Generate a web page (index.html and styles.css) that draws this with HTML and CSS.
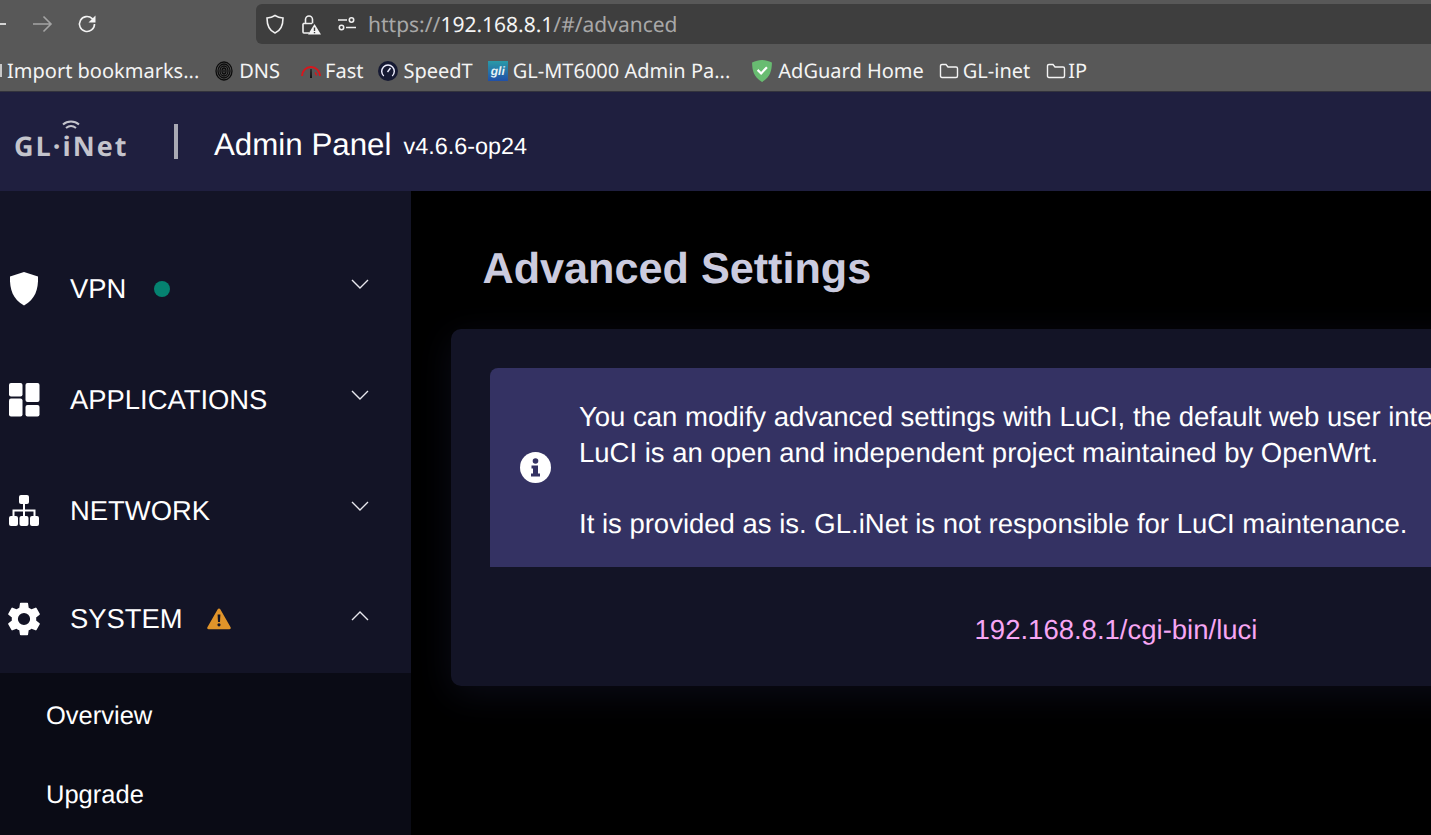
FILE: index.html
```html
<!DOCTYPE html>
<html lang="en">
  <head>
    <meta charset="UTF-8" />
    <meta name="viewport" content="width=device-width, initial-scale=1.0" />
    <title>Admin Panel</title>
    <link rel="stylesheet" href="styles.css">
  </head>

  <body>
    <!-- Browser toolbar -->
    <div class="toolbar">
      <svg class="tool-back" width="6" height="20" viewBox="0 0 6 20"><path d="M0 10h6" /></svg>
      <svg class="tool-forward" width="22" height="20" viewBox="0 0 22 20"><path d="M2 10h18M12.500 2.500 20 10l-7.500 7.500" /></svg>
      <svg class="tool-reload" width="22" height="22" viewBox="0 0 22 22"><path d="M18.500 11a7.500 7.500 0 1 1-2.300-5.400L18.500 8" /><path class="solid" d="M19.500 2.500v7h-7z" /></svg>
      <div class="urlbar">
        <svg class="url-icon" width="20" height="22" viewBox="0 0 20 22"><path d="M10 2.500c2.500 1.600 5 2.300 8 2.500 0 7-1.800 12.500-8 15C3.800 17.500 2 12 2 5c3-.2 5.500-.9 8-2.500z" /></svg>
        <svg class="url-icon" width="20" height="22" viewBox="0 0 20 22"><path d="M2 10.500h9M2 10.500v8.500c0 .8.400 1 1 1h5M4.500 10.500V6.500a3.500 3.500 0 0 1 7 0v4" /><path class="solid" d="M13.500 11 20 21.500H7z" /><path class="lock-mark" d="M13.500 14.500v3.500M13.500 19v1.200" /></svg>
        <svg class="url-icon" width="20" height="16" viewBox="0 0 20 16"><circle cx="14.500" cy="4" r="2.200" /><circle cx="4.500" cy="11.500" r="2.200" /><path d="M1 4h9M9 11.500h10" /></svg>
        <span class="url-text"><span class="url-dim">https://</span>192.168.8.1<span class="url-dim">/#/advanced</span></span>
      </div>
    </div>

    <!-- Bookmarks -->
    <div class="bookmarks">
      <span class="bookmark-cut"></span>
      <span class="bookmark">Import bookmarks...</span>
      <span class="bookmark bm-dns">
        <svg width="18" height="20" viewBox="0 0 18 20"><ellipse class="fp" cx="9" cy="10" rx="8" ry="9" /><ellipse class="fp" cx="9" cy="10" rx="6" ry="7" /><ellipse class="fp" cx="9" cy="10" rx="4" ry="5" /><ellipse class="fp" cx="9" cy="10" rx="2" ry="3" /><path class="fp" d="M9 8.500v3" /></svg>
        DNS
      </span>
      <span class="bookmark bm-fast">
        <svg width="22" height="16" viewBox="0 0 22 16"><path class="gauge" d="M2 13a9 9 0 0 1 18 0" /><path class="gauge-thin" d="M15 9.500a5 5 0 0 1 1.500 3" /><path class="needle" d="M10.500 6h1l.5 9h-2z" /></svg>
        Fast
      </span>
      <span class="bookmark bm-speed">
        <svg width="20" height="20" viewBox="0 0 20 20"><circle class="sp-disc" cx="10" cy="10" r="10" /><path class="sp-ring" d="M5.800 15a6.300 6.300 0 1 1 8.400 0" /><path class="sp-ring" d="M9.500 11l3-4" /></svg>
        SpeedT
      </span>
      <span class="bookmark bm-gl">
        <span class="gl-tile">gli</span>
        GL-MT6000 Admin Pa...
      </span>
      <span class="bookmark bm-ad">
        <svg width="22" height="22" viewBox="0 0 20 20"><path class="ad-shield" d="M10 0c3 0 6 .8 9 2.300 0 7-1.500 13.500-9 17.700C2.500 15.800 1 9.300 1 2.300 4 .8 7 0 10 0z" /><path class="ad-check" d="M6 9l3.200 3.200L14.500 6.500" /></svg>
        AdGuard Home
      </span>
      <span class="bookmark bm-folder">
        <svg width="20" height="16" viewBox="0 0 19 16"><path class="folder" d="M1 3c0-1 .6-1.500 1.500-1.500h4L8.500 4h8c1 0 1.500.5 1.500 1.500V13c0 1-.5 1.500-1.500 1.500h-14C1.500 14.500 1 14 1 13z" /></svg>
        GL-inet
      </span>
      <span class="bookmark bm-folder bm-ip">
        <svg width="20" height="16" viewBox="0 0 19 16"><path class="folder" d="M1 3c0-1 .6-1.500 1.500-1.500h4L8.500 4h8c1 0 1.500.5 1.500 1.500V13c0 1-.5 1.500-1.500 1.500h-14C1.500 14.500 1 14 1 13z" /></svg>
        IP
      </span>
    </div>

    <!-- App header -->
    <div class="header">
      <div class="logo">
        GL·iNet
        <svg class="logo-wifi" width="18" height="12" viewBox="0 0 18 12"><path d="M1 4.500c4.500-4 11.500-4 16 0M4 8c3-2.500 7-2.500 10 0" /></svg>
      </div>
      <div class="header-line"></div>
      <div class="header-title">Admin Panel</div>
      <div class="header-version">v4.6.6-op24</div>
    </div>

    <div class="layout">
      <!-- Sidebar -->
      <div class="sidebar">
        <div class="menu-item">
          <svg class="menu-icon" width="30" height="34" viewBox="0 0 30 34"><path d="M15 0l14 4.500c.5 13-3 23-14 29C4 27.500.500 17.500 1 4.500z" /></svg>
          <span class="menu-label">VPN</span>
          <span class="status-dot"></span>
          <svg class="chevron" width="18" height="10" viewBox="0 0 18 10"><path d="M1 1l8 8 8-8" /></svg>
        </div>
        <div class="menu-item">
          <svg class="menu-icon" width="30" height="34" viewBox="0 0 30 34"><rect x="0" y="0" width="13.500" height="13.500" rx="2" /><rect x="0" y="15.500" width="13.500" height="18" rx="2" /><rect x="16.500" y="0" width="14" height="19" rx="2" /><rect x="16.500" y="22" width="14" height="11.500" rx="2" /></svg>
          <span class="menu-label">APPLICATIONS</span>
          <svg class="chevron" width="18" height="10" viewBox="0 0 18 10"><path d="M1 1l8 8 8-8" /></svg>
        </div>
        <div class="menu-item">
          <svg class="menu-icon" width="30" height="32" viewBox="0 0 30 32"><rect x="10" y="0" width="10" height="9" rx="2" /><rect x="0" y="21" width="9" height="10" rx="2" /><rect x="10.500" y="21" width="9" height="10" rx="2" /><rect x="21" y="21" width="9" height="10" rx="2" /><path class="net-line" d="M15 9v12M4.500 21v-5.500h21V21" /></svg>
          <span class="menu-label">NETWORK</span>
          <svg class="chevron" width="18" height="10" viewBox="0 0 18 10"><path d="M1 1l8 8 8-8" /></svg>
        </div>
        <div class="menu-item menu-open">
          <svg class="menu-icon gear" width="34" height="34" viewBox="2.500 2 19 20"><path d="M19.140 12.940c.04-.3.060-.61.060-.94s-.02-.64-.07-.94l2.030-1.580a.49.49 0 0 0 .12-.61l-1.920-3.320a.49.49 0 0 0-.59-.22l-2.390.96a7 7 0 0 0-1.620-.94l-.36-2.540a.48.48 0 0 0-.48-.41h-3.840a.48.48 0 0 0-.47.41l-.36 2.540a7.200 7.200 0 0 0-1.620.94l-2.390-.96a.48.48 0 0 0-.59.22L2.740 8.870a.48.48 0 0 0 .12.61l2.030 1.580c-.05.3-.09.63-.09.94s.02.640.07.94l-2.030 1.580a.49.49 0 0 0-.12.61l1.920 3.320c.12.22.37.29.59.22l2.390-.96c.5.38 1.030.7 1.620.94l.36 2.540c.05.24.24.41.48.41h3.840c.24 0 .44-.17.47-.41l.36-2.540c.59-.24 1.130-.56 1.620-.94l2.390.96c.22.08.47 0 .59-.22l1.920-3.320a.48.48 0 0 0-.12-.61zM12 15.600A3.600 3.600 0 1 1 12 8.400a3.600 3.600 0 0 1 0 7.200z" /></svg>
          <span class="menu-label">SYSTEM</span>
          <svg class="warn" width="24" height="22" viewBox="0 0 24 22"><path class="warn-bg" d="M12 0.500c.6 0 1 .3 1.300.8l10.300 18c.5 1 0 1.900-1.100 1.900h-21c-1.100 0-1.600-.9-1.100-1.900l10.300-18c.3-.5.700-.8 1.300-.8z" /><path class="warn-mark" d="M10.600 6.500h2.800l-.4 7.500h-2z" /><circle class="warn-mark" cx="12" cy="16.800" r="1.600" /></svg>
          <svg class="chevron chevron-up" width="18" height="10" viewBox="0 0 18 10"><path d="M1 9l8-8 8 8" /></svg>
        </div>
        <div class="submenu">
          <div class="submenu-item">Overview</div>
          <div class="submenu-item">Upgrade</div>
        </div>
      </div>

      <!-- Main content -->
      <div class="main">
        <div class="page-title">Advanced Settings</div>
        <div class="card">
          <div class="alert">
            <svg class="alert-icon" width="31" height="31" viewBox="0 0 31 31"><circle class="alert-disc" cx="15.500" cy="15.500" r="15.500" /><circle class="alert-mark" cx="15.500" cy="9" r="2.800" /><path class="alert-mark" d="M11.500 13.500h6.500v8h2v3h-9v-3h2v-5h-1.500z" /></svg>
            <div class="alert-text">
              <p>You can modify advanced settings with LuCI, the default web user interface of OpenWrt.<br>LuCI is an open and independent project maintained by OpenWrt.</p>
              <p>It is provided as is. GL.iNet is not responsible for LuCI maintenance.</p>
            </div>
          </div>
          <div class="card-link">192.168.8.1/cgi-bin/luci</div>
        </div>
      </div>
    </div>
  </body>
</html>
```
FILE: styles.css
```css
* {
  box-sizing: border-box;
}

html,
body {
  height: 100%;
}

body {
  margin: 0;
  overflow: hidden;
  display: flex;
  flex-direction: column;
  background-color: #000;
  font-family: "Liberation Sans", Arial, sans-serif;
  color: #fff;
  text-rendering: geometricPrecision;
}

/* --- Browser toolbar --- */

.toolbar {
  height: 44px;
  flex: none;
  display: flex;
  align-items: flex-end;
  background-color: #585858;
}

.toolbar svg {
  fill: none;
  stroke-width: 1.6;
  flex: none;
}

.tool-back {
  stroke: #f4f4f4;
  margin-bottom: 10px;
}

.tool-forward {
  stroke: #a4a4a4;
  margin: 0 0 10px 25px;
}

.tool-reload {
  stroke: #f4f4f4;
  margin: 0 0 9px 23px;
}

.toolbar .solid {
  fill: #f4f4f4;
  stroke: none;
}

.toolbar .lock-mark {
  stroke: #3e3e3e;
  stroke-width: 1.4;
}

.urlbar {
  width: 1200px;
  height: 40px;
  margin-left: 158px;
  padding-left: 9px;
  display: flex;
  align-items: center;
  flex: none;
  background-color: #3e3e3e;
  border-radius: 6px 0 0 6px;
  font-family: "Noto Sans", sans-serif;
}

.url-icon {
  stroke: #f0f0f0;
  margin-right: 16px;
}

.url-text {
  margin: 2px 0 0 -5px;
  font-size: 21px;
  color: #f4f4f4;
  white-space: nowrap;
}

.url-dim {
  color: #a8a8a8;
}

/* --- Bookmarks --- */

.bookmarks {
  height: 48px;
  padding-top: 6px;
  flex: none;
  display: flex;
  align-items: center;
  background-color: #585858;
  border-bottom: 1px solid #33333d;
  font-family: "Noto Sans", sans-serif;
  font-size: 20px;
  color: #f4f4f4;
  white-space: nowrap;
}

.bookmark {
  display: flex;
  align-items: center;
  gap: 6px;
  flex: none;
}

.bookmark svg {
  flex: none;
}

.bookmark-cut {
  width: 2px;
  height: 13px;
  margin-right: 5px;
  background-color: #c8c8c8;
  flex: none;
}

.bm-dns {
  margin-left: 16px;
}

.fp {
  fill: none;
  stroke: #0c0c0c;
  stroke-width: 1.3;
}

.bm-fast {
  margin-left: 20px;
  gap: 3px;
}

.gauge {
  fill: none;
  stroke: #d8161c;
  stroke-width: 2;
}

.gauge-thin {
  fill: none;
  stroke: #d8161c;
  stroke-width: 1.5;
}

.needle {
  fill: #111;
}

.bm-speed {
  margin-left: 15px;
  gap: 5px;
}

.sp-disc {
  fill: #161a33;
}

.sp-ring {
  fill: none;
  stroke: #eef;
  stroke-width: 1.4;
}

.bm-gl {
  margin-left: 15px;
  gap: 5px;
}

.gl-tile {
  width: 20px;
  height: 20px;
  display: flex;
  align-items: center;
  justify-content: center;
  background: linear-gradient(#2a9aa8, #2050a8);
  font-family: "Liberation Sans", sans-serif;
  font-style: italic;
  font-weight: bold;
  font-size: 12px;
  color: #e6f2f6;
}

.bm-ad {
  margin-left: 21px;
  gap: 5px;
}

.ad-shield {
  fill: #68bc71;
}

.ad-check {
  fill: none;
  stroke: #fff;
  stroke-width: 2;
}

.bm-folder {
  margin-left: 15px;
  gap: 4px;
}

.bm-ip {
  margin-left: 16px;
  gap: 2px;
}

.folder {
  fill: none;
  stroke: #f4f4f4;
  stroke-width: 1.4;
}

/* --- App header --- */

.header {
  height: 99px;
  flex: none;
  display: flex;
  align-items: center;
  background-color: #1f1f3f;
}

.logo {
  position: relative;
  width: 174px;
  padding: 8px 0 0 14px;
  font-family: "Open Sans", sans-serif;
  font-weight: 700;
  font-size: 27px;
  letter-spacing: 2px;
  color: #c4c4cc;
  flex: none;
}

.logo-wifi {
  position: absolute;
  top: 1px;
  left: 62px;
  fill: none;
  stroke: #c4c4cc;
  stroke-width: 2;
}

.header-line {
  width: 4px;
  height: 35px;
  background-color: #a9a9b4;
  flex: none;
}

.header-title {
  margin: 6px 0 0 36px;
  font-size: 31.3px;
}

.header-version {
  margin: 10px 0 0 12px;
  font-size: 23.4px;
}

/* --- Layout --- */

.layout {
  flex: 1;
  min-height: 0;
  display: flex;
}

/* --- Sidebar --- */

.sidebar {
  width: 411px;
  flex: none;
  padding-top: 42px;
  background-color: #131426;
}

.menu-item {
  height: 111px;
  display: flex;
  align-items: center;
  font-size: 27.4px;
  position: relative;
}

.menu-open {
  height: 107px;
  padding-bottom: 2px;
}

.menu-icon {
  width: 34px;
  margin-left: 7px;
  fill: #fff;
  flex: none;
}

.gear {
  margin-left: 7px;
}

.net-line {
  fill: none;
  stroke: #fff;
  stroke-width: 2;
}

.menu-label {
  margin-left: 29px;
}

.status-dot {
  width: 16px;
  height: 16px;
  margin-left: 28px;
  border-radius: 50%;
  background-color: #058270;
}

.warn {
  margin-left: 24px;
}

.warn-bg {
  fill: #e0942a;
}

.warn-mark {
  fill: #131426;
}

.chevron {
  position: absolute;
  left: 351px;
  top: 46px;
  fill: none;
  stroke: #e8e8ee;
  stroke-width: 1.4;
}

.chevron-up {
  top: 45px;
}

.submenu {
  background-color: #0a0b15;
  padding-top: 4px;
  height: 200px;
}

.submenu-item {
  height: 79px;
  padding-left: 46px;
  display: flex;
  align-items: center;
  font-size: 25.5px;
}

/* --- Main --- */

.main {
  flex: 1;
  min-width: 0;
  padding-left: 40px;
  overflow: hidden;
}

.page-title {
  height: 138px;
  padding: 54px 0 0 31.500px;
  font-size: 43.2px;
  font-weight: bold;
  color: #cbcbdf;
}

.card {
  width: 1330px;
  height: 357px;
  padding: 39px;
  background-color: #131426;
  border-radius: 10px;
  box-shadow: 0 8px 36px rgba(19, 20, 38, 0.6);
}

.alert {
  height: 199px;
  display: flex;
  align-items: center;
  background-color: #343263;
  border-radius: 8px 8px 0 0;
}

.alert-icon {
  margin-left: 30px;
  flex: none;
}

.alert-disc {
  fill: #fff;
}

.alert-mark {
  fill: #343263;
}

.alert-text {
  margin: 5px 0 0 28px;
  font-size: 27.5px;
  line-height: 36px;
  white-space: nowrap;
}

.alert-text p {
  margin: 0;
}

.alert-text p + p {
  margin-top: 35px;
}

.card-link {
  margin-top: 47px;
  text-align: center;
  font-size: 27.5px;
  color: #f7a6f4;
}
```
